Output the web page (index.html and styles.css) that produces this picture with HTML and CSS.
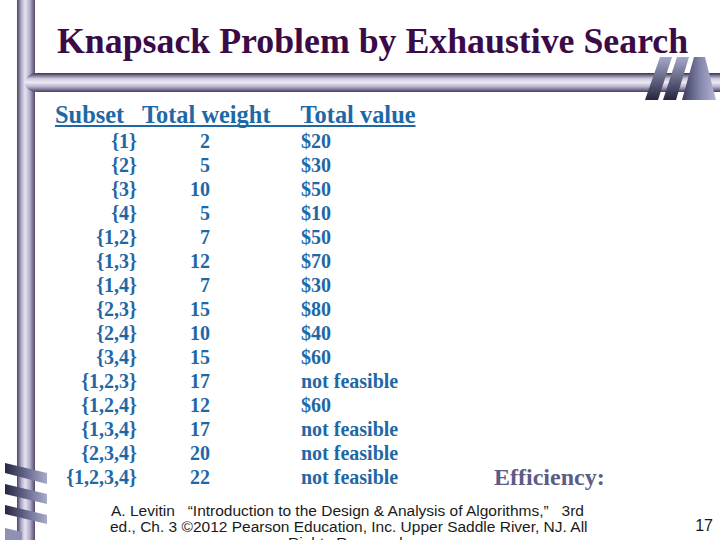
FILE: index.html
```html
<!DOCTYPE html>
<html lang="en">
<head>
<meta charset="utf-8">
<title>Knapsack Problem by Exhaustive Search</title>
<link rel="stylesheet" href="styles.css">
</head>
<body>
<svg class="deco" width="720" height="540" viewBox="0 0 720 540" aria-hidden="true">
  <defs>
    <linearGradient id="vbar" x1="0" y1="0" x2="1" y2="0">
      <stop offset="0" stop-color="#4f3f63"/>
      <stop offset="0.25" stop-color="#b3aecb"/>
      <stop offset="0.45" stop-color="#e6e4f2"/>
      <stop offset="0.7" stop-color="#b6b1ce"/>
      <stop offset="1" stop-color="#55456b"/>
    </linearGradient>
    <linearGradient id="hbar" x1="0" y1="0" x2="0" y2="1">
      <stop offset="0" stop-color="#3e2c4e"/>
      <stop offset="0.3" stop-color="#cfcce2"/>
      <stop offset="0.5" stop-color="#eceaf5"/>
      <stop offset="0.72" stop-color="#b7b2cf"/>
      <stop offset="1" stop-color="#4c3b5e"/>
    </linearGradient>
    <linearGradient id="logo" x1="0" y1="0" x2="0" y2="1">
      <stop offset="0" stop-color="#a6a8ca"/>
      <stop offset="1" stop-color="#25273f"/>
    </linearGradient>
    <linearGradient id="logo3" x1="0" y1="0" x2="1" y2="0">
      <stop offset="0" stop-color="#3a3c5c"/>
      <stop offset="0.55" stop-color="#8587ad"/>
      <stop offset="1" stop-color="#b4b5d4"/>
    </linearGradient>
    <linearGradient id="coil" x1="0" y1="0" x2="1" y2="0">
      <stop offset="0" stop-color="#262740"/>
      <stop offset="0.55" stop-color="#6c6e94"/>
      <stop offset="1" stop-color="#a9abc8"/>
    </linearGradient>
  </defs>
  <rect x="17" y="0" width="18" height="540" fill="url(#vbar)"/>
  <path d="M24 82.5 Q27 73 37 73 H720 V92 H37 Q27 92 24 82.5 Z" fill="url(#hbar)"/>
  <polygon points="660,57 672,57 658,100 645,100" fill="url(#logo)"/>
  <polygon points="677,57 689,57 676,100 663,100" fill="url(#logo)"/>
  <polygon points="694,57 705,57 716,100 682,100" fill="url(#logo3)"/>
  <polygon points="5,463 47,473 47,484 5,473" fill="url(#coil)"/>
  <polygon points="5,484 47,494 47,504 5,494" fill="url(#coil)"/>
  <polygon points="5,505 47,515 47,524 5,514" fill="url(#coil)"/>
  <polygon points="5,528 22,532 22,540 5,540" fill="#8f91b3"/>
</svg>

<main class="slide">
  <h1 class="title">Knapsack Problem by Exhaustive Search</h1>
  <div class="head">Subset   Total weight     Total value</div>
  <div class="table">
    <span class="sub">{1}</span><span class="wt">2</span><span class="val">$20</span>
    <span class="sub">{2}</span><span class="wt">5</span><span class="val">$30</span>
    <span class="sub">{3}</span><span class="wt">10</span><span class="val">$50</span>
    <span class="sub">{4}</span><span class="wt">5</span><span class="val">$10</span>
    <span class="sub">{1,2}</span><span class="wt">7</span><span class="val">$50</span>
    <span class="sub">{1,3}</span><span class="wt">12</span><span class="val">$70</span>
    <span class="sub">{1,4}</span><span class="wt">7</span><span class="val">$30</span>
    <span class="sub">{2,3}</span><span class="wt">15</span><span class="val">$80</span>
    <span class="sub">{2,4}</span><span class="wt">10</span><span class="val">$40</span>
    <span class="sub">{3,4}</span><span class="wt">15</span><span class="val">$60</span>
    <span class="sub">{1,2,3}</span><span class="wt">17</span><span class="val">not feasible</span>
    <span class="sub">{1,2,4}</span><span class="wt">12</span><span class="val">$60</span>
    <span class="sub">{1,3,4}</span><span class="wt">17</span><span class="val">not feasible</span>
    <span class="sub">{2,3,4}</span><span class="wt">20</span><span class="val">not feasible</span>
    <span class="sub">{1,2,3,4}</span><span class="wt">22</span><span class="val">not feasible</span>
    <span class="eff">Efficiency:</span>
  </div>
  <footer class="foot">
    <p class="cite">A. Levitin   “Introduction to the Design &amp; Analysis of Algorithms,”   3rd<br>ed., Ch. 3 ©2012 Pearson Education, Inc. Upper Saddle River, NJ. All<br>Rights Reserved.</p>
    <span class="page">17</span>
  </footer>
</main>
</body>
</html>
```

FILE: styles.css
```css
html, body {
  margin: 0;
  padding: 0;
}
body {
  width: 720px;
  height: 540px;
  overflow: hidden;
  position: relative;
  background: #ffffff;
  font-family: "Liberation Serif", "Times New Roman", serif;
}
.deco {
  position: absolute;
  left: 0;
  top: 0;
  z-index: 0;
}
.slide {
  position: relative;
  z-index: 1;
  padding: 21px 0 0 55px;
}
.title {
  margin: 0 0 0 2px;
  font-family: "Liberation Serif", "Times New Roman", serif;
  font-size: 35.8px;
  line-height: 40px;
  font-weight: 700;
  color: #3b0b47;
  white-space: nowrap;
}
.head {
  margin-top: 40px;
  font-size: 24.4px;
  line-height: 28px;
  font-weight: 700;
  color: #1f68a6;
  white-space: pre;
  text-decoration: underline;
  text-decoration-thickness: 2px;
  text-underline-offset: 2px;
  text-decoration-skip-ink: none;
}
.table {
  display: grid;
  grid-template-columns: 82px 73px 284px auto;
  font-size: 20px;
  line-height: 24px;
  font-weight: 700;
  color: #1f68a6;
}
.sub {
  grid-column: 1;
  text-align: right;
}
.wt {
  grid-column: 2;
  text-align: right;
}
.val {
  grid-column: 3;
  padding-left: 91px;
  white-space: nowrap;
}
.eff {
  grid-column: 4;
  grid-row: 15;
  font-size: 24px;
  color: #5c5c86;
  white-space: nowrap;
}
.foot {
  display: flex;
  align-items: flex-start;
  margin: 14px 0 0 55px;
}
.cite {
  margin: 0;
  width: 475px;
  text-align: center;
  white-space: pre;
  font-family: "Liberation Sans", Arial, sans-serif;
  font-size: 15.5px;
  line-height: 16px;
  color: #1a1a1a;
}
.page {
  margin: 14px 7px 0 auto;
  font-family: "Liberation Sans", Arial, sans-serif;
  font-size: 16px;
  line-height: 18px;
  color: #1a1a1a;
}
```
